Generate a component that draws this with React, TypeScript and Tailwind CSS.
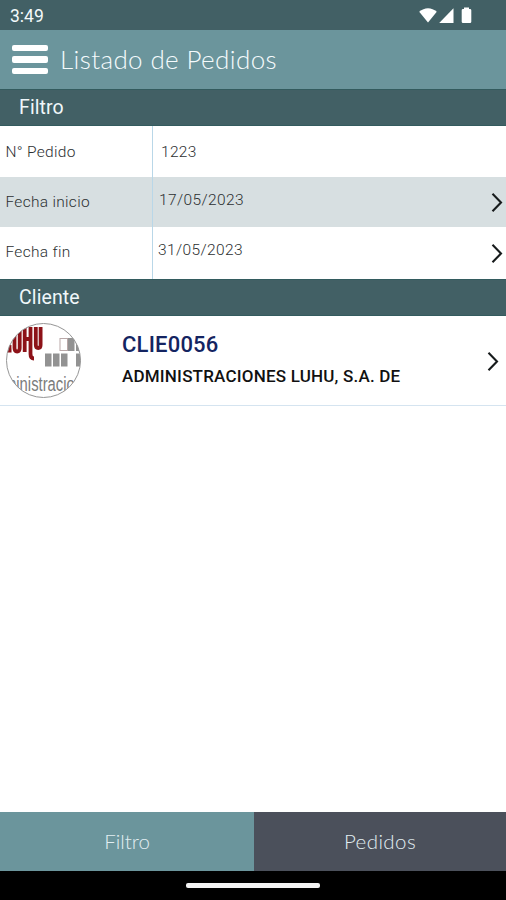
import type { ReactNode } from 'react';

function Chevron() {
  return (
    <svg width="12" height="20" viewBox="0 0 12 20" fill="none" stroke="#171b1c" strokeWidth="2.1" className="shrink-0">
      <path d="M1.5 1.8 L10 10.500 L1.5 19.2" />
    </svg>
  );
}

function SectionTitle({ children }: { children: ReactNode }) {
  return (
    <h2 className="flex h-[37px] shrink-0 items-center border-y border-[#335b5e] bg-[#426065] pl-[19px] pt-px text-[19.5px] font-normal tracking-[0.1px] text-[#f0f7fa]">
      {children}
    </h2>
  );
}

function StatusIcons() {
  return (
    <svg width="58" height="20" viewBox="0 0 58 20" fill="#fff">
      <path d="M1.2 6.8 C6.5 2 13.5 2 18.8 6.8 L10 17.6 Z" />
      <path d="M21.2 18 L35.500 3.2 V18 Z" />
      <path d="M46 4 V2.5 h5 V4 h1 q1.300 0 1.300 1.300 V16.700 q0 1.300 -1.300 1.300 h-7 q-1.300 0 -1.300 -1.300 V5.300 q0 -1.300 1.300 -1.300 Z" />
    </svg>
  );
}

function Avatar() {
  return (
    <svg width="76" height="76" viewBox="0 0 76 76" className="shrink-0">
      <defs>
        <clipPath id="round">
          <circle cx="37.5" cy="37.5" r="37" />
        </clipPath>
      </defs>
      <g clipPath="url(#round)">
        <rect width="76" height="76" fill="#fff" />
        <g fill="none" stroke="#8d1218" strokeWidth="3.8">
          <path d="M-3 27.500 H5.500 M3.500 22 V29" />
          <path d="M8.500 12 V25 q0 3.500 2.600 3.500 q2.600 0 2.600 -3.500 V4" />
          <path d="M18.700 4 V29 M18.700 16 H24.500 M24.500 4 V31 q0 4.500 3.500 4.500" />
          <path d="M29.800 4 V22 q0 3 2.400 3 q2.400 0 2.400 -3 V4" />
        </g>
        <g fill="#929292">
          <rect x="39" y="30.500" width="6.500" height="13" />
          <rect x="47" y="30.500" width="6.500" height="13" />
          <rect x="55" y="30.500" width="6.500" height="13" />
          <rect x="70" y="30.500" width="8" height="13" />
          <rect x="62" y="15" width="6.500" height="13" />
          <rect x="70" y="15" width="6" height="13" />
        </g>
        <rect x="54" y="15.500" width="7.500" height="12" fill="#fff" stroke="#b9a8a8" />
        <text x="-2" y="68" fill="#7c7c7c" fontSize="20" textLength="79" lengthAdjust="spacingAndGlyphs" className="font-['Liberation_Sans',sans-serif]">
          ministracion
        </text>
      </g>
      <circle cx="37.5" cy="37.5" r="37" fill="none" stroke="#969696" />
    </svg>
  );
}

export default function App() {
  return (
    <div className="flex h-[900px] w-[506px] flex-col overflow-hidden bg-white font-['Roboto',sans-serif]">
      <div className="flex h-[30px] shrink-0 items-center justify-between bg-[#426065] pl-[10px] pr-[30px] text-[17.5px] text-[#f4fafb]">
        <span className="pt-[2px]">3:49</span>
        <StatusIcons />
      </div>
      <header className="flex h-[59px] shrink-0 items-center bg-[#6b959c] pl-[12px]">
        <button aria-label="Menú" className="flex w-[36px] flex-col gap-[5px]">
          <span className="h-[6.500px] rounded-[2px] bg-white" />
          <span className="h-[6.500px] rounded-[2px] bg-white" />
          <span className="h-[6.500px] rounded-[2px] bg-white" />
        </button>
        <h1 className="ml-[12px] whitespace-nowrap font-['Lato',sans-serif] text-[26px] font-light tracking-[0.38px] text-[#f5fbfd]">Listado de Pedidos</h1>
      </header>

      <SectionTitle>Filtro</SectionTitle>
      <div className="flex shrink-0 flex-col text-[15.5px] font-light text-[#2c3031]">
        <div className="flex h-[51px]">
          <div className="flex w-[153px] items-center border-r border-[#b9d7e8] pl-[5.5px] pt-[2px] tracking-[0.3px]">N° Pedido</div>
          <div className="flex flex-1 items-center pl-[8px] pt-[2px] tracking-[0.3px]">1223</div>
        </div>
        <div className="flex h-[50px] bg-[#d7dfe1]">
          <div className="flex w-[153px] items-center border-r border-[#b9d7e8] pl-[5.5px] pt-[2px] tracking-[0.3px]">Fecha inicio</div>
          <div className="flex flex-1 items-center justify-between pl-[6px] pr-[3px] tracking-[0.4px]">
            <span className="pb-[2px]">17/05/2023</span>
            <Chevron />
          </div>
        </div>
        <div className="flex h-[52px]">
          <div className="flex w-[153px] items-center border-r border-[#b9d7e8] pl-[5.5px] tracking-[0.3px]">Fecha fin</div>
          <div className="flex flex-1 items-center justify-between pb-[1px] pl-[5px] pr-[3px] tracking-[0.4px]">
            <span className="pb-[3px]">31/05/2023</span>
            <Chevron />
          </div>
        </div>
      </div>

      <SectionTitle>Cliente</SectionTitle>
      <div className="flex h-[90px] shrink-0 items-center border-b border-[#d5e4f0] pl-[6px] pr-[7px]">
        <Avatar />
        <div className="ml-[40px] flex-1 whitespace-nowrap pb-[3px]">
          <p className="text-[22px] font-medium leading-[28px] tracking-[0.2px] text-[#142461]">CLIE0056</p>
          <p className="mt-[5px] text-[17px] font-medium leading-[24px] tracking-[0.2px] text-[#111]">ADMINISTRACIONES LUHU, S.A. DE</p>
        </div>
        <Chevron />
      </div>

      <main className="flex-1" />

      <nav className="flex h-[59px] shrink-0 font-['Lato',sans-serif] text-[20.5px] font-light text-[#e2eef2]">
        <button className="w-[254px] bg-[#6b959c]">Filtro</button>
        <button className="flex-1 bg-[#4b505b] tracking-[0.4px]">Pedidos</button>
      </nav>
      <div className="flex h-[29px] shrink-0 items-center justify-center bg-black">
        <div className="h-[5px] w-[134px] rounded-[2px] bg-[#f3f3f3]" />
      </div>
    </div>
  );
}
